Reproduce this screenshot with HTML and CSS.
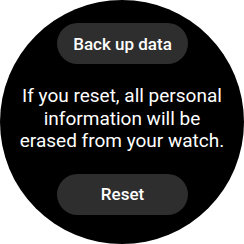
FILE: index.html
```html
<!DOCTYPE html>
<html>
<head>
<meta charset="utf-8">
<link rel="stylesheet" href="styles.css">
</head>
<body>
<div class="watch">
  <button class="pill">Back up data</button>
  <p class="msg">If you reset, all personal<br>information will be<br>erased from your watch.</p>
  <button class="pill">Reset</button>
</div>
</body>
</html>
```
FILE: styles.css
```css
html, body {
  margin: 0;
  padding: 0;
  background: #ffffff;
}
.watch {
  width: 244px;
  height: 244px;
  border-radius: 50%;
  background: #000000;
  display: flex;
  flex-direction: column;
  align-items: center;
  padding-top: 23px;
  box-sizing: border-box;
  font-family: Roboto, "Noto Sans", sans-serif;
  color: #ffffff;
}
.pill {
  width: 131px;
  height: 41px;
  border: none;
  border-radius: 21px;
  background: #2e2e2e;
  color: #ffffff;
  font-family: Roboto, sans-serif;
  font-weight: 500;
  font-size: 17px;
  padding: 0;
  margin-left: 1px;
  flex-shrink: 0;
}
.msg {
  margin: 21px 0 0 0;
  white-space: nowrap;
  text-align: center;
  font-size: 19px;
  line-height: 22.5px;
}
.msg + .pill {
  margin-top: 21px;
}
```
